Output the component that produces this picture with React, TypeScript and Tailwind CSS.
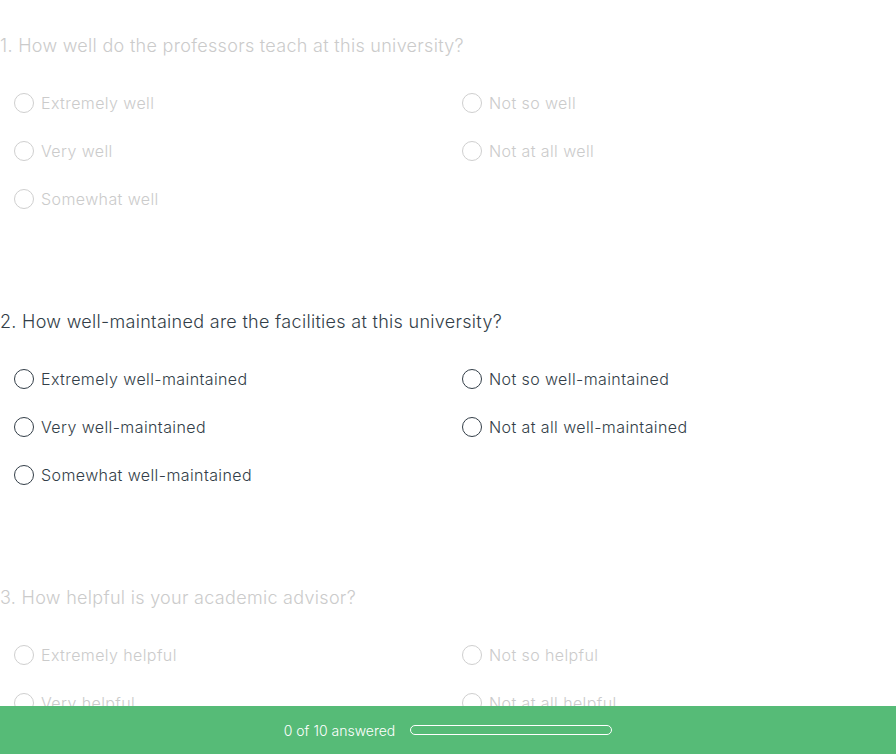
import React from 'react';

interface Question {
    title: string;
    options: string[];
    active?: boolean;
}

const QUESTIONS: Question[] = [
    {
        title: "1. How well do the professors teach at this university?",
        options: ["Extremely well", "Very well", "Somewhat well", "Not so well", "Not at all well"],
    },
    {
        title: "2. How well-maintained are the facilities at this university?",
        options: ["Extremely well-maintained", "Very well-maintained", "Somewhat well-maintained", "Not so well-maintained", "Not at all well-maintained"],
        active: true,
    },
    {
        title: "3. How helpful is your academic advisor?",
        options: ["Extremely helpful", "Very helpful", "Somewhat helpful", "Not so helpful", "Not at all helpful"],
    },
];

const QuestionBlock: React.FC<{ q: Question }> = ({ q }) => {
    const text = q.active ? 'text-[#333e48]' : 'text-[#cbcbcb]';
    const ring = q.active ? 'border-[#333e48]' : 'border-[#cfcfcf]';
    return (
        <div className="mb-[87px]">
            <h2 className={`text-[18px] leading-6 font-light tracking-[0.3px] ${text}`}>{q.title}</h2>
            <div className="mt-[21px] grid grid-cols-2 grid-rows-3 grid-flow-col">
                {q.options.map(opt => (
                    <label key={opt} className="h-12 flex items-center pl-[14px] cursor-pointer">
                        <span className={`w-5 h-5 rounded-full border-[1.5px] ${ring} shrink-0`} />
                        <span className={`ml-[7px] text-[16px] font-light tracking-[0.4px] ${text}`}>{opt}</span>
                    </label>
                ))}
            </div>
        </div>
    );
};

export default function App() {
    return (
        <div className="w-full min-h-screen bg-white font-['Inter',sans-serif] pt-[34px]">
            {QUESTIONS.map(q => (
                <QuestionBlock key={q.title} q={q} />
            ))}

            {/* Progress footer */}
            <div className="fixed bottom-0 left-0 right-0 h-12 bg-[#56bb77] flex items-center justify-center gap-[15px]">
                <span className="text-white text-[14px] font-light">0 of 10 answered</span>
                <div className="w-[202px] h-[10px] rounded-full border-[1.5px] border-white" />
            </div>
        </div>
    );
}
